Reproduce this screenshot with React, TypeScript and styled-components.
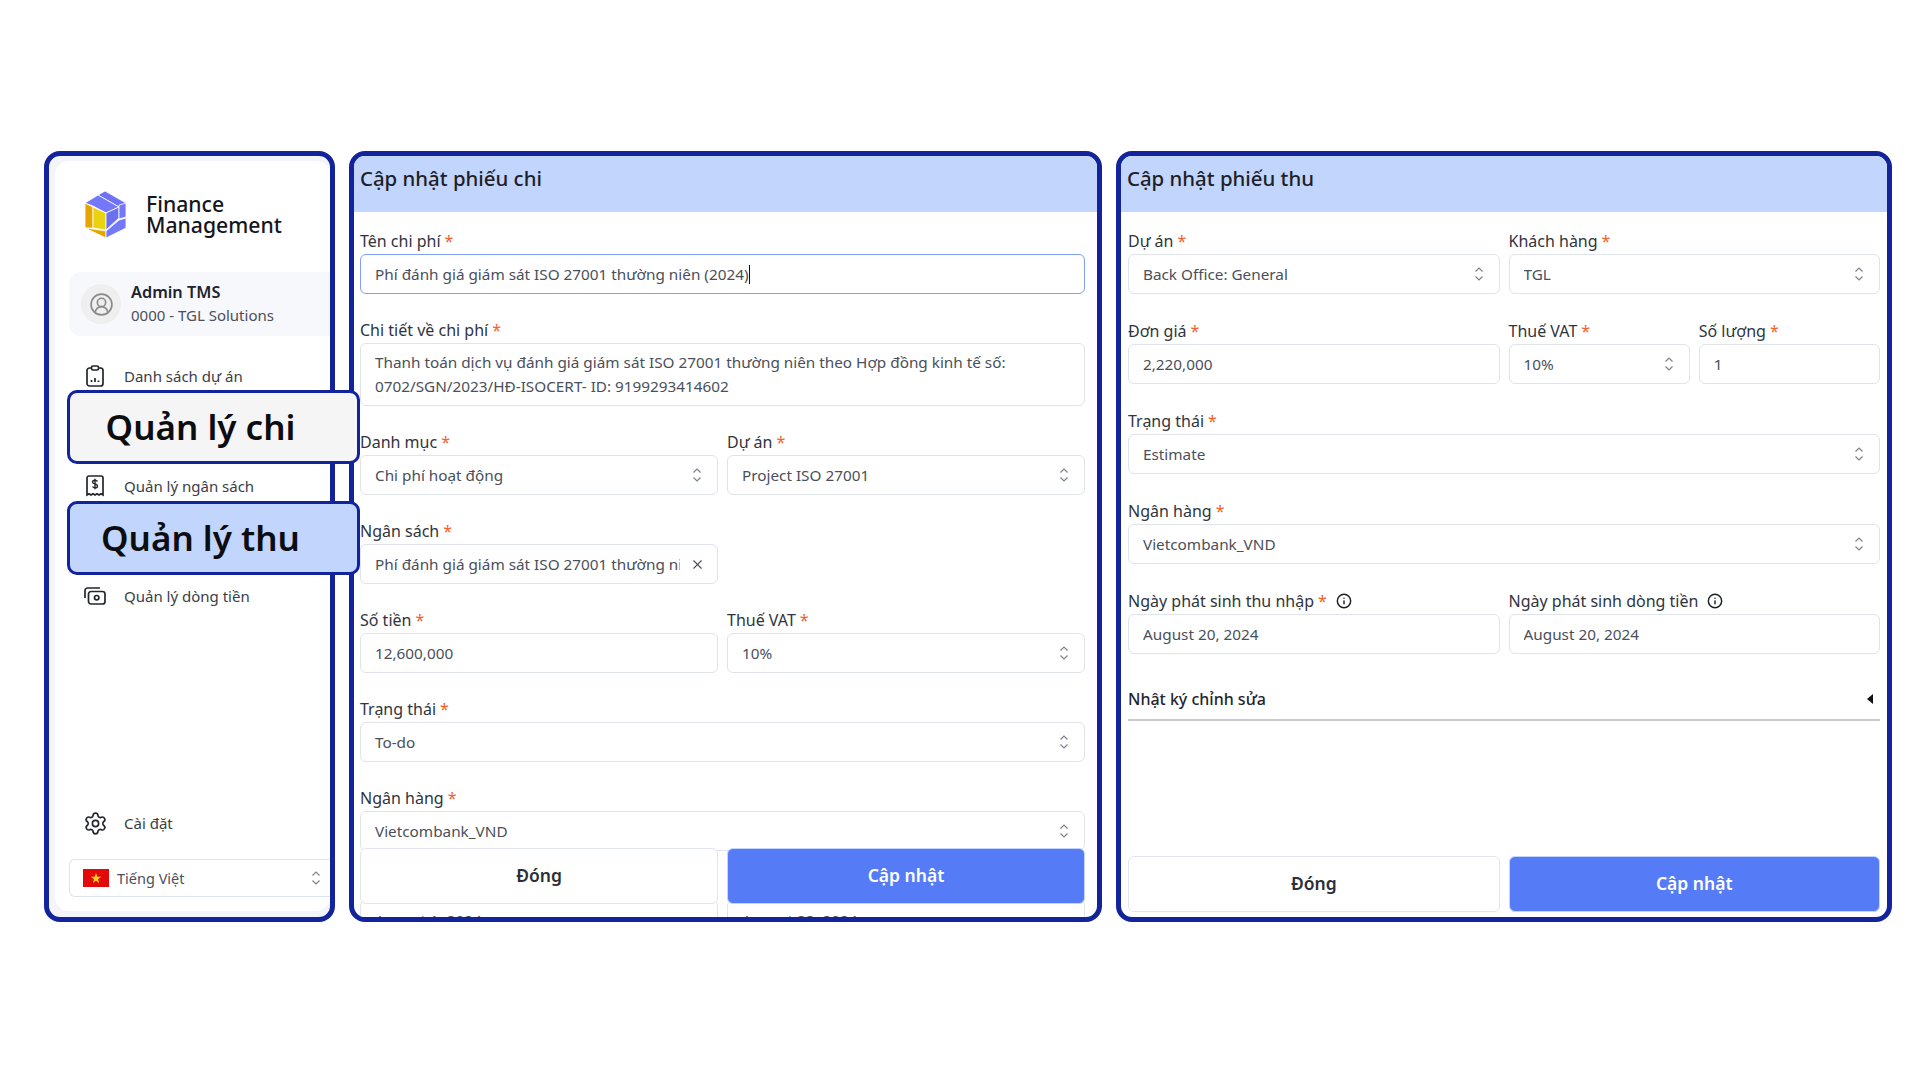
import styled, { createGlobalStyle } from "styled-components";
import { CircleUserRound, Info, Settings, X } from "lucide-react";
import type { ReactNode } from "react";

const GlobalStyle = createGlobalStyle`
	body {
		margin: 0;
		background: #fff;
		font-family: "Noto Sans", "Open Sans", sans-serif;
		color: #2b2f38;
	}
`;

const Page = styled.div`
	display: flex;
	align-items: flex-start;
	gap: 14px;
	width: 1920px;
	height: 1080px;
	box-sizing: border-box;
	padding: 151px 0 0 44px;
	overflow: hidden;
`;

const Frame = styled.section<{ $width: number }>`
	position: relative;
	display: flex;
	flex-direction: column;
	flex: none;
	box-sizing: border-box;
	width: ${(p) => p.$width}px;
	height: 771px;
	border: 5px solid #12239b;
	border-radius: 16px;
	overflow: hidden;
	background: #fff;
`;

/* sidebar */
const SideWrap = styled.div`
	position: relative;
	flex: none;
	width: 291px;
	height: 771px;
`;

const SideFrame = styled(Frame)`
	background: #f3f5fa;
	padding: 5px 0 6px 6px;
`;

const SideInner = styled.div`
	display: flex;
	flex-direction: column;
	flex: 1;
	background: #fff;
	border-radius: 14px;
	padding: 30px 0 14px 14px;
`;

const Brand = styled.div`
	display: flex;
	align-items: center;
	gap: 19px;
	height: 47px;
	padding-left: 16px;
`;

const BrandName = styled.div`
	margin-top: -2px;
	font-size: 21.2px;
	font-weight: 500;
	line-height: 21px;
	color: #14161c;
`;

const UserCard = styled.div`
	display: flex;
	align-items: center;
	gap: 10px;
	height: 64px;
	margin-top: 34px;
	padding-left: 12px;
	background: #f6f8fc;
	border-radius: 12px 0 0 12px;
`;

const Avatar = styled.div`
	display: flex;
	align-items: center;
	justify-content: center;
	width: 40px;
	height: 40px;
	border-radius: 50%;
	background: #efefef;
	color: #8b8b8b;
`;

const UserName = styled.div`
	font-size: 16.3px;
	font-weight: 600;
	line-height: 23px;
	color: #20232b;
`;

const UserOrg = styled.div`
	font-size: 15px;
	line-height: 23px;
	color: #4a4f5a;
`;

const Menu = styled.nav`
	display: flex;
	flex-direction: column;
	margin-top: 12px;
`;

const MenuRow = styled.div`
	display: flex;
	align-items: center;
	gap: 19px;
	height: 55px;
	padding-left: 16px;
	font-size: 15px;
	color: #3a3e48;
`;

const IconBox = styled.span`
	display: flex;
	align-items: center;
	justify-content: center;
	width: 20px;
	height: 24px;
	color: #23262e;

	svg {
		flex: none;
	}
`;

const SettingsRow = styled(MenuRow)`
	margin-top: auto;
	height: 36px;
	margin-bottom: 18px;
`;

const Callout = styled.div<{ $top: number; $active?: boolean }>`
	position: absolute;
	top: ${(p) => p.$top}px;
	left: 23px;
	display: flex;
	align-items: center;
	justify-content: center;
	box-sizing: border-box;
	width: 293px;
	height: 74px;
	border: 3px solid #12239b;
	border-radius: 10px;
	background: ${(p) => (p.$active ? "#c2d5fc" : "#f5f5f5")};
	font-size: 35px;
	font-weight: 600;
	color: #0c0d10;
	padding: 0 26px 2px 0;
	z-index: 2;
`;

const LangSelect = styled.div`
	display: flex;
	align-items: center;
	box-sizing: border-box;
	height: 38px;
	padding: 0 9px 0 13px;
	border: 1px solid #dfe3ea;
	border-right: none;
	border-radius: 6px 0 0 6px;
	font-size: 14.5px;
	color: #4a4f5a;
`;

const Flag = styled.svg`
	flex: none;
	margin-right: 8px;
`;

const LangText = styled.span`
	flex: 1;
`;

/* forms */
const PanelHeader = styled.header`
	flex: none;
	display: flex;
	align-items: center;
	box-sizing: border-box;
	height: 56px;
	padding: 0 0 12px 6px;
	background: #c2d5fc;
	font-size: 20.4px;
	font-weight: 500;
	color: #1d2027;
`;

const Form = styled.div<{ $gap: number; $left: number; $right: number }>`
	display: flex;
	flex-direction: column;
	gap: ${(p) => p.$gap}px;
	padding: 19px ${(p) => p.$right}px 0 ${(p) => p.$left}px;
`;

const Row = styled.div`
	display: grid;
	grid-template-columns: 1fr 1fr;
	gap: 9px;
`;

const FieldBox = styled.div`
	min-width: 0;
`;

const LabelLine = styled.div`
	display: flex;
	align-items: center;
	height: 20px;
	margin-bottom: 3px;
	font-size: 16px;
	line-height: 20px;
	color: #30343d;
	white-space: nowrap;
`;

const Star = styled.span`
	margin-left: 4px;
	color: #f4602c;
`;

const HintIcon = styled(Info)`
	margin-left: 9px;
	color: #1d2027;
`;

const Control = styled.div<{ $focused?: boolean }>`
	display: flex;
	align-items: center;
	box-sizing: border-box;
	height: 40px;
	padding: 0 15px 0 14px;
	border: 1px solid ${(p) => (p.$focused ? "#7f9ff5" : "#e0e3ea")};
	border-radius: 6px;
	background: #fff;
	font-size: 15.3px;
	color: #4a4f5a;
	white-space: nowrap;
`;

const Value = styled.span`
	flex: 1;
	min-width: 0;
	overflow: hidden;
`;

const Caret = styled.span`
	display: inline-block;
	width: 1px;
	height: 20px;
	margin-bottom: -5px;
	background: #111;
`;

const RemoveIcon = styled(X)`
	flex: none;
	margin: 0 -3px 0 10px;
	color: #4a4f5a;
`;

const TextArea = styled.div`
	box-sizing: border-box;
	height: 63px;
	padding: 6px 14px 0;
	border: 1px solid #e0e3ea;
	border-radius: 6px;
	font-size: 15.3px;
	line-height: 24px;
	color: #4a4f5a;
`;

const Footer = styled.div`
	position: absolute;
	left: 6px;
	right: 12px;
	bottom: 13px;
	display: grid;
	grid-template-columns: 1fr 1fr;
	gap: 9px;
	z-index: 1;
`;

const FooterFlow = styled(Row)`
	margin-top: auto;
	padding: 0 7px 5px;
`;

const Button = styled.button<{ $primary?: boolean }>`
	box-sizing: border-box;
	height: 56px;
	padding: 0 0 2px;
	border: 1px solid ${(p) => (p.$primary ? "#c2d5fc" : "#e2e5ec")};
	border-radius: 6px;
	background: ${(p) => (p.$primary ? "#557cf6" : "#fff")};
	color: ${(p) => (p.$primary ? "#fff" : "#2b2f38")};
	font-family: inherit;
	font-size: 17.5px;
	font-weight: 600;
`;

const LogSection = styled.div`
	display: flex;
	align-items: center;
	justify-content: space-between;
	box-sizing: border-box;
	height: 40px;
	margin: 27px 7px 0;
	padding: 0 7px 2px 0;
	border-bottom: 2px solid #c9c9d1;
	font-size: 16px;
	font-weight: 500;
	color: #23262e;
`;

function Chevrons() {
	return (
		<svg width="10" height="16" viewBox="0 0 10 16" fill="none" stroke="#7d828c" strokeWidth="1.2" style={{ flex: "none" }}>
			<path d="M1.5 5.5 5 2l3.5 3.5M1.5 10.5 5 14l3.5-3.5" />
		</svg>
	);
}

function Logo() {
	return (
		<svg width="42" height="47" viewBox="0 0 42 47" stroke="#fff" strokeWidth="0.8" strokeLinejoin="round">
			<polygon points="20,0 41,12 34,16 13,4" fill="#6f72f6" />
			<polygon points="13,4 34,16 21,22 8,15 0,12" fill="#7478f8" />
			<polygon points="0,12 8,16 8,37 0,37" fill="#e5a600" />
			<polygon points="8,16 21,22 21,39 8,37" fill="#e8d30e" />
			<polygon points="8,38 21,40 21,47 0,37" fill="#e5a600" />
			<polygon points="21,22 34,16 34,27 21,39" fill="#6a70ee" />
			<polygon points="34,14 41,12 41,26 34,28" fill="#7478f8" />
			<polygon points="21,40 34,29 41,27 41,37 21,47" fill="#7478f8" />
		</svg>
	);
}

function ClipboardIcon() {
	return (
		<svg width="18" height="22" viewBox="0 0 18 22" fill="none" stroke="currentColor" strokeWidth="1.7">
			<rect x="1" y="3" width="16" height="18" rx="2.5" />
			<rect x="5.5" y="1" width="7" height="4" rx="1.5" fill="#fff" />
			<path d="M5.5 17v-2M9 17v-4M12.5 17v-1.5" />
		</svg>
	);
}

function ReceiptIcon() {
	return (
		<svg width="18" height="22" viewBox="0 0 18 22" fill="none" stroke="currentColor" strokeWidth="1.7">
			<path d="M1 3a2 2 0 0 1 2-2h12a2 2 0 0 1 2 2v17l-2-1.3-2 1.3-2-1.3-2 1.3-2-1.3-2 1.3-2-1.3-2 1.3z" />
			<path d="M11.5 6.5C11 5.6 10 5.2 9 5.2c-1.4 0-2.5.7-2.5 1.9 0 2.6 5 1.2 5 3.8 0 1.2-1.1 1.9-2.5 1.9-1 0-2-.4-2.5-1.3M9 3.8v10.4" strokeWidth="1.4" />
		</svg>
	);
}

function CashIcon() {
	return (
		<svg width="22" height="18" viewBox="0 0 22 18" fill="none" stroke="currentColor" strokeWidth="1.7">
			<path d="M1 11V3.5A2.5 2.5 0 0 1 3.5 1H16" />
			<rect x="4.5" y="4.5" width="16.5" height="12.5" rx="2.5" />
			<circle cx="12.7" cy="10.7" r="2.2" />
		</svg>
	);
}

function Field({ label, required = true, hint, children }: { label: string; required?: boolean; hint?: boolean; children: ReactNode }) {
	return (
		<FieldBox>
			<LabelLine>
				{label}
				{required && <Star>*</Star>}
				{hint && <HintIcon size={16} strokeWidth={2.2} />}
			</LabelLine>
			{children}
		</FieldBox>
	);
}

function Select({ value }: { value: string }) {
	return (
		<Control>
			<Value>{value}</Value>
			<Chevrons />
		</Control>
	);
}

function Input({ value }: { value: string }) {
	return (
		<Control>
			<Value>{value}</Value>
		</Control>
	);
}

function Sidebar() {
	return (
		<SideWrap>
			<SideFrame $width={291}>
				<SideInner>
					<Brand>
						<Logo />
						<BrandName>
							Finance
							<br />
							Management
						</BrandName>
					</Brand>
					<UserCard>
						<Avatar>
							<CircleUserRound size={25} strokeWidth={1.6} />
						</Avatar>
						<div>
							<UserName>Admin TMS</UserName>
							<UserOrg>0000 - TGL Solutions</UserOrg>
						</div>
					</UserCard>
					<Menu>
						<MenuRow>
							<IconBox>
								<ClipboardIcon />
							</IconBox>
							Danh sách dự án
						</MenuRow>
						<MenuRow />
						<MenuRow>
							<IconBox>
								<ReceiptIcon />
							</IconBox>
							Quản lý ngân sách
						</MenuRow>
						<MenuRow />
						<MenuRow>
							<IconBox>
								<CashIcon />
							</IconBox>
							Quản lý dòng tiền
						</MenuRow>
					</Menu>
					<SettingsRow>
						<IconBox>
							<Settings size={25} strokeWidth={1.6} />
						</IconBox>
						Cài đặt
					</SettingsRow>
					<LangSelect>
						<Flag width="26" height="18" viewBox="0 0 26 18">
							<rect width="26" height="18" fill="#e30a0a" />
							<polygon points="13,4 14.3,7.8 18.2,7.8 15,10.2 16.2,14 13,11.7 9.8,14 11,10.2 7.8,7.8 11.7,7.8" fill="#f7d417" />
						</Flag>
						<LangText>Tiếng Việt</LangText>
						<Chevrons />
					</LangSelect>
				</SideInner>
			</SideFrame>
			<Callout $top={239}>Quản lý chi</Callout>
			<Callout $top={350} $active>
				Quản lý thu
			</Callout>
		</SideWrap>
	);
}

function ExpensePanel() {
	return (
		<Frame $width={753}>
			<PanelHeader>Cập nhật phiếu chi</PanelHeader>
			<Form $gap={26} $left={6} $right={12}>
				<Field label="Tên chi phí">
					<Control $focused>
						<Value>
							Phí đánh giá giám sát ISO 27001 thường niên (2024)
							<Caret />
						</Value>
					</Control>
				</Field>
				<Field label="Chi tiết về chi phí">
					<TextArea>
						Thanh toán dịch vụ đánh giá giám sát ISO 27001 thường niên theo Hợp đồng kinh tế số: 0702/SGN/2023/HĐ-ISOCERT- ID: 9199293414602
					</TextArea>
				</Field>
				<Row>
					<Field label="Danh mục">
						<Select value="Chi phí hoạt động" />
					</Field>
					<Field label="Dự án">
						<Select value="Project ISO 27001" />
					</Field>
				</Row>
				<Row>
					<Field label="Ngân sách">
						<Control>
							<Value>Phí đánh giá giám sát ISO 27001 thường niên (2024)</Value>
							<RemoveIcon size={15} strokeWidth={1.8} />
						</Control>
					</Field>
				</Row>
				<Row>
					<Field label="Số tiền">
						<Input value="12,600,000" />
					</Field>
					<Field label="Thuế VAT">
						<Select value="10%" />
					</Field>
				</Row>
				<Field label="Trạng thái">
					<Select value="To-do" />
				</Field>
				<Field label="Ngân hàng">
					<Select value="Vietcombank_VND" />
				</Field>
				<Row>
					<Field label="Ngày phát sinh chi phí">
						<Input value="August 1, 2024" />
					</Field>
					<Field label="Ngày phát sinh dòng tiền">
						<Input value="August 22, 2024" />
					</Field>
				</Row>
			</Form>
			<Footer>
				<Button>Đóng</Button>
				<Button $primary>Cập nhật</Button>
			</Footer>
		</Frame>
	);
}

function IncomePanel() {
	return (
		<Frame $width={776}>
			<PanelHeader>Cập nhật phiếu thu</PanelHeader>
			<Form $gap={27} $left={7} $right={7}>
				<Row>
					<Field label="Dự án">
						<Select value="Back Office: General" />
					</Field>
					<Field label="Khách hàng">
						<Select value="TGL" />
					</Field>
				</Row>
				<Row>
					<Field label="Đơn giá">
						<Input value="2,220,000" />
					</Field>
					<Row>
						<Field label="Thuế VAT">
							<Select value="10%" />
						</Field>
						<Field label="Số lượng">
							<Input value="1" />
						</Field>
					</Row>
				</Row>
				<Field label="Trạng thái">
					<Select value="Estimate" />
				</Field>
				<Field label="Ngân hàng">
					<Select value="Vietcombank_VND" />
				</Field>
				<Row>
					<Field label="Ngày phát sinh thu nhập" hint>
						<Input value="August 20, 2024" />
					</Field>
					<Field label="Ngày phát sinh dòng tiền" required={false} hint>
						<Input value="August 20, 2024" />
					</Field>
				</Row>
			</Form>
			<LogSection>
				Nhật ký chỉnh sửa
				<svg width="6" height="10" viewBox="0 0 6 10">
					<polygon points="6,0 6,10 0,5" fill="#111" />
				</svg>
			</LogSection>
			<FooterFlow>
				<Button>Đóng</Button>
				<Button $primary>Cập nhật</Button>
			</FooterFlow>
		</Frame>
	);
}

function App() {
	return (
		<Page>
			<GlobalStyle />
			<Sidebar />
			<ExpensePanel />
			<IncomePanel />
		</Page>
	);
}

export default App;
